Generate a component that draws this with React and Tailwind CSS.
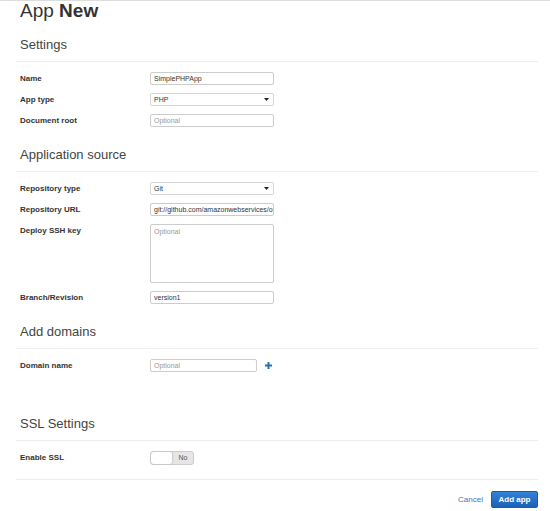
import React from "react";

const Label = ({ children }) => (
  <div className="w-[130px] shrink-0 h-[13px] leading-[13px] text-[8px] font-bold text-[#333]">{children}</div>
);

const Field = ({ children, placeholder, w = "w-[124px]" }) => (
  <div className={`${w} h-[13px] border border-[#ccc] rounded-[2px] bg-white px-[3px] flex items-center text-[7px] leading-[11px] overflow-hidden whitespace-nowrap ${placeholder ? "text-[#999]" : "text-[#333]"}`}>
    {children}
  </div>
);

const Select = ({ children }) => (
  <div className="w-[124px] h-[13px] border border-[#d6d6d6] rounded-[2px] bg-white pl-[3px] pr-[4px] flex items-center justify-between text-[7px] leading-[11px] text-[#333]">
    <span>{children}</span>
    <svg width="5" height="3" viewBox="0 0 5 3"><path d="M0 0H5L2.5 3Z" fill="#222" /></svg>
  </div>
);

const Row = ({ label, children }) => (
  <div className="flex items-start">
    <Label>{label}</Label>
    {children}
  </div>
);

const Heading = ({ children, mt }) => (
  <div className={`${mt} pl-[4px] pb-[8px] border-b border-[#eee] text-[13px] leading-[16px] text-[#444]`}>{children}</div>
);

export default function App() {
  return (
    <div className="w-[550px] h-[511px] bg-white border-t border-[#ddd] overflow-hidden font-['Liberation_Sans',Arial,sans-serif]">
      <h1 className="pl-[20px] text-[19px] leading-[19px] text-[#333]">
        App <span className="font-bold">New</span>
      </h1>
      <div className="ml-[16px] mr-[12px]">
        <Heading mt="mt-[17px]">Settings</Heading>
        <div className="mt-[10px] pl-[4px] flex flex-col gap-[8px]">
          <Row label="Name"><Field>SimplePHPApp</Field></Row>
          <Row label="App type"><Select>PHP</Select></Row>
          <Row label="Document root"><Field placeholder>Optional</Field></Row>
        </div>

        <Heading mt="mt-[20px]">Application source</Heading>
        <div className="mt-[10px] pl-[4px] flex flex-col gap-[8px]">
          <Row label="Repository type"><Select>Git</Select></Row>
          <Row label="Repository URL"><Field>git://github.com/amazonwebservices/op</Field></Row>
          <Row label="Deploy SSH key">
            <div className="w-[124px] h-[59px] border border-[#ccc] rounded-[2px] bg-white px-[3px] pt-[2px] text-[7px] leading-[10px] text-[#999]">Optional</div>
          </Row>
          <Row label="Branch/Revision"><Field>version1</Field></Row>
        </div>

        <Heading mt="mt-[20px]">Add domains</Heading>
        <div className="mt-[10px] pl-[4px] flex flex-col gap-[8px]">
          <Row label="Domain name">
            <Field placeholder w="w-[107px]">Optional</Field>
            <div className="ml-[8px] h-[13px] flex items-center">
              <svg width="7" height="7" viewBox="0 0 7 7">
                <path d="M2.5 0H4.5V2.5H7V4.5H4.5V7H2.5V4.5H0V2.5H2.5Z" fill="#2b6cb8" />
              </svg>
            </div>
          </Row>
        </div>

        <Heading mt="mt-[44px]">SSL Settings</Heading>
        <div className="mt-[10px] pl-[4px] flex flex-col gap-[8px]">
          <Row label="Enable SSL">
            <div className="w-[44px] h-[14px] rounded-[3px] border border-[#ccc] bg-[#e6e6e6] flex">
              <div className="w-[22px] h-full bg-white rounded-[3px] border-r border-[#d0d0d0] shadow-[0_0_1px_rgba(0,0,0,0.2)]" />
              <div className="flex-1 flex items-center justify-center text-[7px] text-[#555]">No</div>
            </div>
          </Row>
        </div>

        <div className="mt-[14px] border-t border-[#eee]" />
        <div className="mt-[11px] flex justify-end items-center gap-[8px]">
          <span className="text-[8px] text-[#3a74c2]">Cancel</span>
          <div className="w-[47px] h-[17px] rounded-[2px] border border-[#1b5ba8] bg-gradient-to-b from-[#3282d8] to-[#1b62b7] flex items-center justify-center text-[8px] font-bold text-white">
            Add app
          </div>
        </div>
      </div>
    </div>
  );
}
